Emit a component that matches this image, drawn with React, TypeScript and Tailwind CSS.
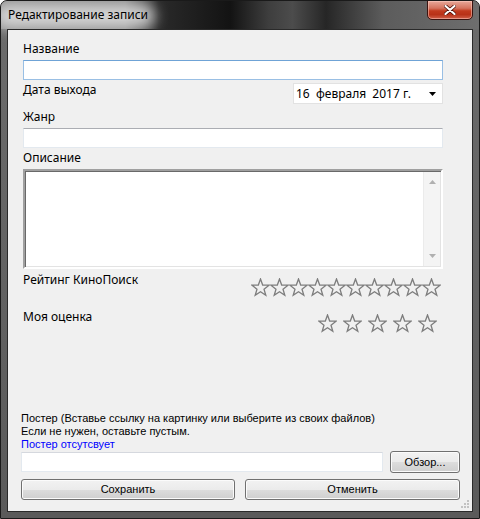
const Star = () => (
  <svg width="19" height="19" viewBox="0 0 19 19" className="block shrink-0">
    <polygon
      points="9.5,1 11.67,7.01 18.06,7.22 13.02,11.14 14.79,17.28 9.5,13.7 4.21,17.28 5.98,11.14 0.94,7.22 7.33,7.01"
      fill="none"
      stroke="#7d7d7d"
      strokeWidth="1.3"
    />
  </svg>
)

const Stars = ({ count, gap }: { count: number; gap: string }) => (
  <div className={`flex ${gap}`}>
    {Array.from({ length: count }).map((_, i) => (
      <Star key={i} />
    ))}
  </div>
)

const WinButton = ({ label, className = '' }: { label: string; className?: string }) => (
  <button
    className={`flex items-center justify-center rounded-[3px] border border-[#707070] bg-[linear-gradient(180deg,#f2f2f2_0%,#ebebeb_50%,#dddddd_50%,#cfcfcf_100%)] shadow-[inset_0_0_0_1px_#fbfbfb] font-['Liberation_Sans',Arial,sans-serif] text-[11px] text-black ${className}`}
  >
    {label}
  </button>
)

export default function App() {
  return (
    <div className="w-[480px] h-[519px] bg-white">
      <div className="relative flex flex-col w-[480px] h-[519px] rounded-t-[7px] border border-[#1a1a1a] bg-[linear-gradient(180deg,#6c6c6c,#5a5a5a)] overflow-hidden">
        {/* Title bar */}
        <div className="relative h-[28px] shrink-0 flex items-center pl-[7px] bg-[linear-gradient(90deg,#8e8e8e_0%,#858585_26%,#2a2a2a_33%,#131313_48%,#3e3e3e_56%,#4c4c4c_61%,#262626_68%,#5c5c5c_80%,#6e6e6e_100%)]">
          <span className="absolute left-[-6px] top-[3px] w-[160px] h-[24px] rounded-full bg-[#e6e6e6]/80 blur-[7px]" />
          <span className="relative font-['Noto_Sans',sans-serif] text-[12px] leading-none text-black">
            Редактирование записи
          </span>
        </div>

        {/* Close button */}
        <button className="absolute top-[-1px] right-[6px] w-[46px] h-[20px] flex items-center justify-center rounded-b-[5px] border border-[#3b1410] bg-[linear-gradient(180deg,#e8a89a_0%,#d4735e_40%,#c23a1e_55%,#b83218_75%,#d0604a_100%)] shadow-[inset_0_0_0_1px_rgba(255,210,200,0.5)]">
          <svg width="12" height="10" viewBox="0 0 12 10">
            <path d="M1.5 1 L10.5 9 M10.5 1 L1.5 9" stroke="#4a0f08" strokeWidth="3.6" strokeLinecap="round" />
            <path d="M1.5 1 L10.5 9 M10.5 1 L1.5 9" stroke="#ffffff" strokeWidth="2.2" strokeLinecap="round" />
          </svg>
        </button>

        {/* Client area */}
        <div className="px-[6px]">
          <div className="relative flex flex-col h-[483px] border border-[#2a2a2a] bg-[#f0f0f0] font-['Noto_Sans',sans-serif] text-[12px] text-black">
            <div className="flex flex-col pl-[15px] pr-[29px]">
              <div className="mt-[11px] h-[16px] leading-[16px]">Название</div>
              <div className="mt-[3px] h-[20px] border border-[#99bfe4] border-t-[#6fa3d6] bg-white" />

              <div className="mt-[2px] flex justify-between">
                <div className="h-[16px] leading-[16px]">Дата выхода</div>
                <div className="mt-[1px] w-[150px] h-[21px] flex items-center justify-between border border-[#e2e2e2] bg-white pl-[2px] pr-[6px] whitespace-pre">
                  <span>16  февраля  2017 г.</span>
                  <svg width="7" height="4" viewBox="0 0 7 4">
                    <polygon points="0,0 7,0 3.5,4" fill="#000" />
                  </svg>
                </div>
              </div>

              <div className="mt-[5px] h-[16px] leading-[16px]">Жанр</div>
              <div className="mt-[3px] h-[20px] border border-[#e3e9ef] border-t-[#abadb3] bg-white" />

              <div className="mt-[2px] h-[16px] leading-[16px]">Описание</div>
              <div className="mt-[3px] h-[100px] flex border-2 border-t-[#a0a0a0] border-l-[#a0a0a0] border-r-white border-b-white bg-white shadow-[inset_1px_1px_0_#696969,inset_-1px_-1px_0_#e3e3e3]">
                <div className="flex-1" />
                <div className="w-[17px] my-[1px] mr-[1px] flex flex-col items-center justify-between bg-[#f4f4f4] border-l border-[#ebebeb] py-[8px]">
                  <svg width="7" height="4" viewBox="0 0 7 4">
                    <polygon points="0,4 7,4 3.5,0" fill="#b0b0b0" />
                  </svg>
                  <svg width="7" height="4" viewBox="0 0 7 4">
                    <polygon points="0,0 7,0 3.5,4" fill="#b0b0b0" />
                  </svg>
                </div>
              </div>

              <div className="mt-[3px] flex justify-between">
                <div className="h-[16px] leading-[16px]">Рейтинг КиноПоиск</div>
                <div className="mt-[6px] pr-[2px]">
                  <Stars count={10} gap="gap-0" />
                </div>
              </div>

              <div className="mt-[12px] flex justify-between">
                <div className="h-[16px] leading-[16px]">Моя оценка</div>
                <div className="mt-[5px] pr-[6px]">
                  <Stars count={5} gap="gap-[6px]" />
                </div>
              </div>
            </div>

            {/* Poster section */}
            <div className="mt-auto flex flex-col pl-[13px] pr-[12px] pb-[11px] font-['Liberation_Sans',Arial,sans-serif] text-[11px]">
              <div className="h-[14px] leading-[14px]">
                Постер (Вставье ссылку на картинку или выберите из своих файлов)
              </div>
              <div className="h-[13px] leading-[13px]">Если не нужен, оставьте пустым.</div>
              <div className="h-[12px] leading-[12px] text-[#0000ff]">Постер отсутсвует</div>
              <div className="mt-[1px] flex items-center gap-[7px]">
                <div className="w-[362px] h-[20px] border border-[#e3e9ef] border-t-[#d5d8de] bg-white" />
                <WinButton label="Обзор..." className="w-[70px] h-[22px]" />
              </div>
              <div className="mt-[6px] flex gap-[10px]">
                <WinButton label="Сохранить" className="w-[214px] h-[21px]" />
                <WinButton label="Отменить" className="w-[215px] h-[21px]" />
              </div>
            </div>

            {/* Size grip */}
            <svg width="10" height="10" viewBox="0 0 10 10" className="absolute right-[2px] bottom-[2px]">
              <rect x="7" y="1" width="2" height="2" fill="#c2c2c2" />
              <rect x="4" y="4" width="2" height="2" fill="#c2c2c2" />
              <rect x="7" y="4" width="2" height="2" fill="#c2c2c2" />
              <rect x="1" y="7" width="2" height="2" fill="#c2c2c2" />
              <rect x="4" y="7" width="2" height="2" fill="#c2c2c2" />
              <rect x="7" y="7" width="2" height="2" fill="#c2c2c2" />
            </svg>
          </div>
        </div>
      </div>
    </div>
  )
}
